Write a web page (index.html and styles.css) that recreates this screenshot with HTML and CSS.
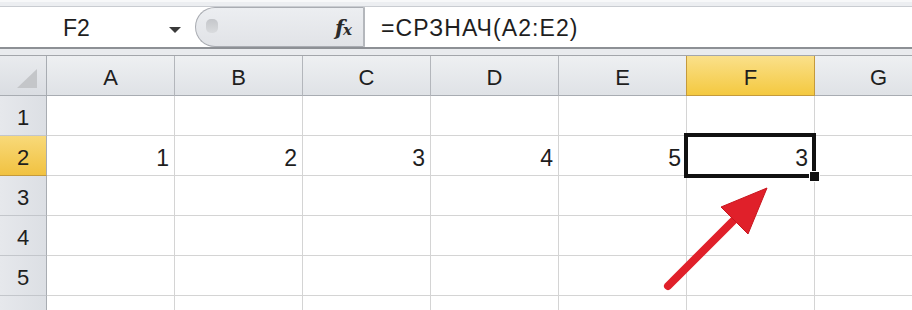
FILE: index.html
```html
<!DOCTYPE html>
<html lang="ru">
<head>
<meta charset="utf-8">
<title>Excel</title>
<link rel="stylesheet" href="styles.css">
</head>
<body>
<div class="app">
  <div class="topband"></div>
  <div class="formula-bar">
    <div class="namebox"><span class="name">F2</span><span class="dd"></span></div>
    <div class="fxbox"><span class="grip"></span><span class="fx">f<span class="fx-x">x</span></span></div>
    <div class="formula">=СРЗНАЧ(A2:E2)</div>
  </div>
  <div class="sep"></div>
  <div class="sheet">
    <div class="corner"><span class="tri"></span></div>
    <div class="ch">A</div><div class="ch">B</div><div class="ch">C</div><div class="ch">D</div><div class="ch">E</div><div class="ch sel">F</div><div class="ch">G</div>

    <div class="rh">1</div>
    <div class="c"></div><div class="c"></div><div class="c"></div><div class="c"></div><div class="c"></div><div class="c"></div><div class="c"></div>

    <div class="rh sel">2</div>
    <div class="c">1</div><div class="c">2</div><div class="c">3</div><div class="c">4</div><div class="c">5</div><div class="c active">3<span class="selbox"></span><span class="handle"></span></div><div class="c"></div>

    <div class="rh">3</div>
    <div class="c"></div><div class="c"></div><div class="c"></div><div class="c"></div><div class="c"></div><div class="c"></div><div class="c"></div>

    <div class="rh">4</div>
    <div class="c"></div><div class="c"></div><div class="c"></div><div class="c"></div><div class="c"></div><div class="c"></div><div class="c"></div>

    <div class="rh">5</div>
    <div class="c"></div><div class="c"></div><div class="c"></div><div class="c"></div><div class="c"></div><div class="c"></div><div class="c"></div>

    <div class="rh"></div>
    <div class="c"></div><div class="c"></div><div class="c"></div><div class="c"></div><div class="c"></div><div class="c"></div><div class="c"></div>
  </div>
  <svg class="arrow" width="912" height="310" viewBox="0 0 912 310">
    <line x1="668" y1="286" x2="738" y2="216" stroke="#e0202a" stroke-width="8" stroke-linecap="round"/>
    <polygon points="767,188 721,207 748,234" fill="#e0202a" stroke="#c8161e" stroke-width="1" stroke-linejoin="round"/>
  </svg>
</div>
</body>
</html>
```
FILE: styles.css
```css
* { box-sizing: border-box; }
html, body { margin: 0; padding: 0; background: #fff; }
body {
  font-family: "Liberation Sans", Arial, sans-serif;
  color: #1e1e1e;
  width: 912px;
  height: 310px;
  overflow: hidden;
}
.app {
  position: relative;
  width: 912px;
  height: 310px;
  overflow: hidden;
}
.topband {
  height: 7px;
  background: #eceef1;
  border-top: 2px solid #f7f8f9;
  border-bottom: 1px solid #c9ccd1;
}
.formula-bar {
  display: flex;
  height: 42px;
  background: #fff;
  border-bottom: 2px solid #8d9095;
}
.namebox {
  width: 192px;
  display: flex;
  align-items: center;
  padding-left: 63px;
  font-size: 23px;
  position: relative;
}
.name { padding-top: 2px; }
.dd {
  position: absolute;
  left: 169px;
  top: 20px;
  width: 0;
  height: 0;
  border-left: 6px solid transparent;
  border-right: 6px solid transparent;
  border-top: 6px solid #3a3a3a;
}
.fxbox {
  width: 170px;
  margin: 0 0 0 3px;
  background: linear-gradient(#eceef1, #e1e3e7);
  border: 1px solid #a9acb2;
  border-right: 2px solid #b4b7bc;
  border-radius: 22px 0 0 22px;
  display: flex;
  align-items: center;
  justify-content: space-between;
  padding: 0 12px 0 10px;
}
.grip {
  width: 12px;
  height: 14px;
  border-radius: 5px;
  background: linear-gradient(#c4c6ca, #d9dbde);
  margin-top: -2px;
}
.fx {
  font-family: "DejaVu Serif", "Liberation Serif", serif;
  font-style: italic;
  font-weight: bold;
  font-size: 21px;
  color: #2a2a2a;
  letter-spacing: -1px;
}
.fx-x { font-size: 15px; }
.formula {
  flex: 1;
  display: flex;
  align-items: center;
  padding-left: 16px;
  font-size: 23px;
  letter-spacing: 1.1px;
  padding-top: 2px;
}
.sep {
  height: 7px;
  background: #e9ebee;
  border-bottom: 1px solid #a3a6ab;
}
.sheet {
  display: grid;
  grid-template-columns: 47px repeat(7, 128px);
  grid-auto-rows: 40px;
}
.corner {
  position: relative;
  background: linear-gradient(#e9ebee, #dadde2);
  border-right: 1px solid #a8acb2;
  border-bottom: 1px solid #a8acb2;
}
.tri {
  position: absolute;
  left: 17px;
  top: 13px;
  width: 0;
  height: 0;
  border-left: 20px solid transparent;
  border-bottom: 19px solid #c4c6c9;
}
.ch {
  display: flex;
  align-items: center;
  justify-content: center;
  padding-top: 4px;
  font-size: 22px;
  background: linear-gradient(#eef0f2, #dfe2e6);
  border-right: 1px solid #b3b6bb;
  border-bottom: 1px solid #a8acb2;
}
.ch.sel {
  background: linear-gradient(#fae08a, #f4c940);
  border-right: 1px solid #c49a3c;
  border-left: 1px solid #c49a3c;
  border-bottom: 1px solid #c49a3c;
  margin-left: -1px;
}
.rh {
  display: flex;
  align-items: center;
  justify-content: center;
  padding-top: 5px;
  font-size: 22px;
  background: linear-gradient(90deg, #e6e8ec, #dcdfe4);
  border-right: 1px solid #a8acb2;
  border-bottom: 1px solid #c3c6cb;
}
.rh.sel {
  background: linear-gradient(#f8d979, #f1c241);
  border-bottom: 1px solid #c49a3c;
}
.c {
  position: relative;
  display: flex;
  align-items: center;
  justify-content: flex-end;
  padding: 5px 5px 0 0;
  font-size: 23px;
  border-right: 1px solid #d4d4d4;
  border-bottom: 1px solid #d4d4d4;
}
.c.active { padding-right: 6px; }
.selbox {
  position: absolute;
  left: -3px;
  top: -3px;
  right: -2px;
  bottom: -3px;
  border: 4px solid #111;
  z-index: 1;
}
.handle {
  position: absolute;
  right: -6px;
  bottom: -7px;
  width: 11px;
  height: 11px;
  background: #111;
  border: 1px solid #fff;
  z-index: 2;
}
.arrow {
  position: absolute;
  left: 0;
  top: 0;
  pointer-events: none;
}
```
